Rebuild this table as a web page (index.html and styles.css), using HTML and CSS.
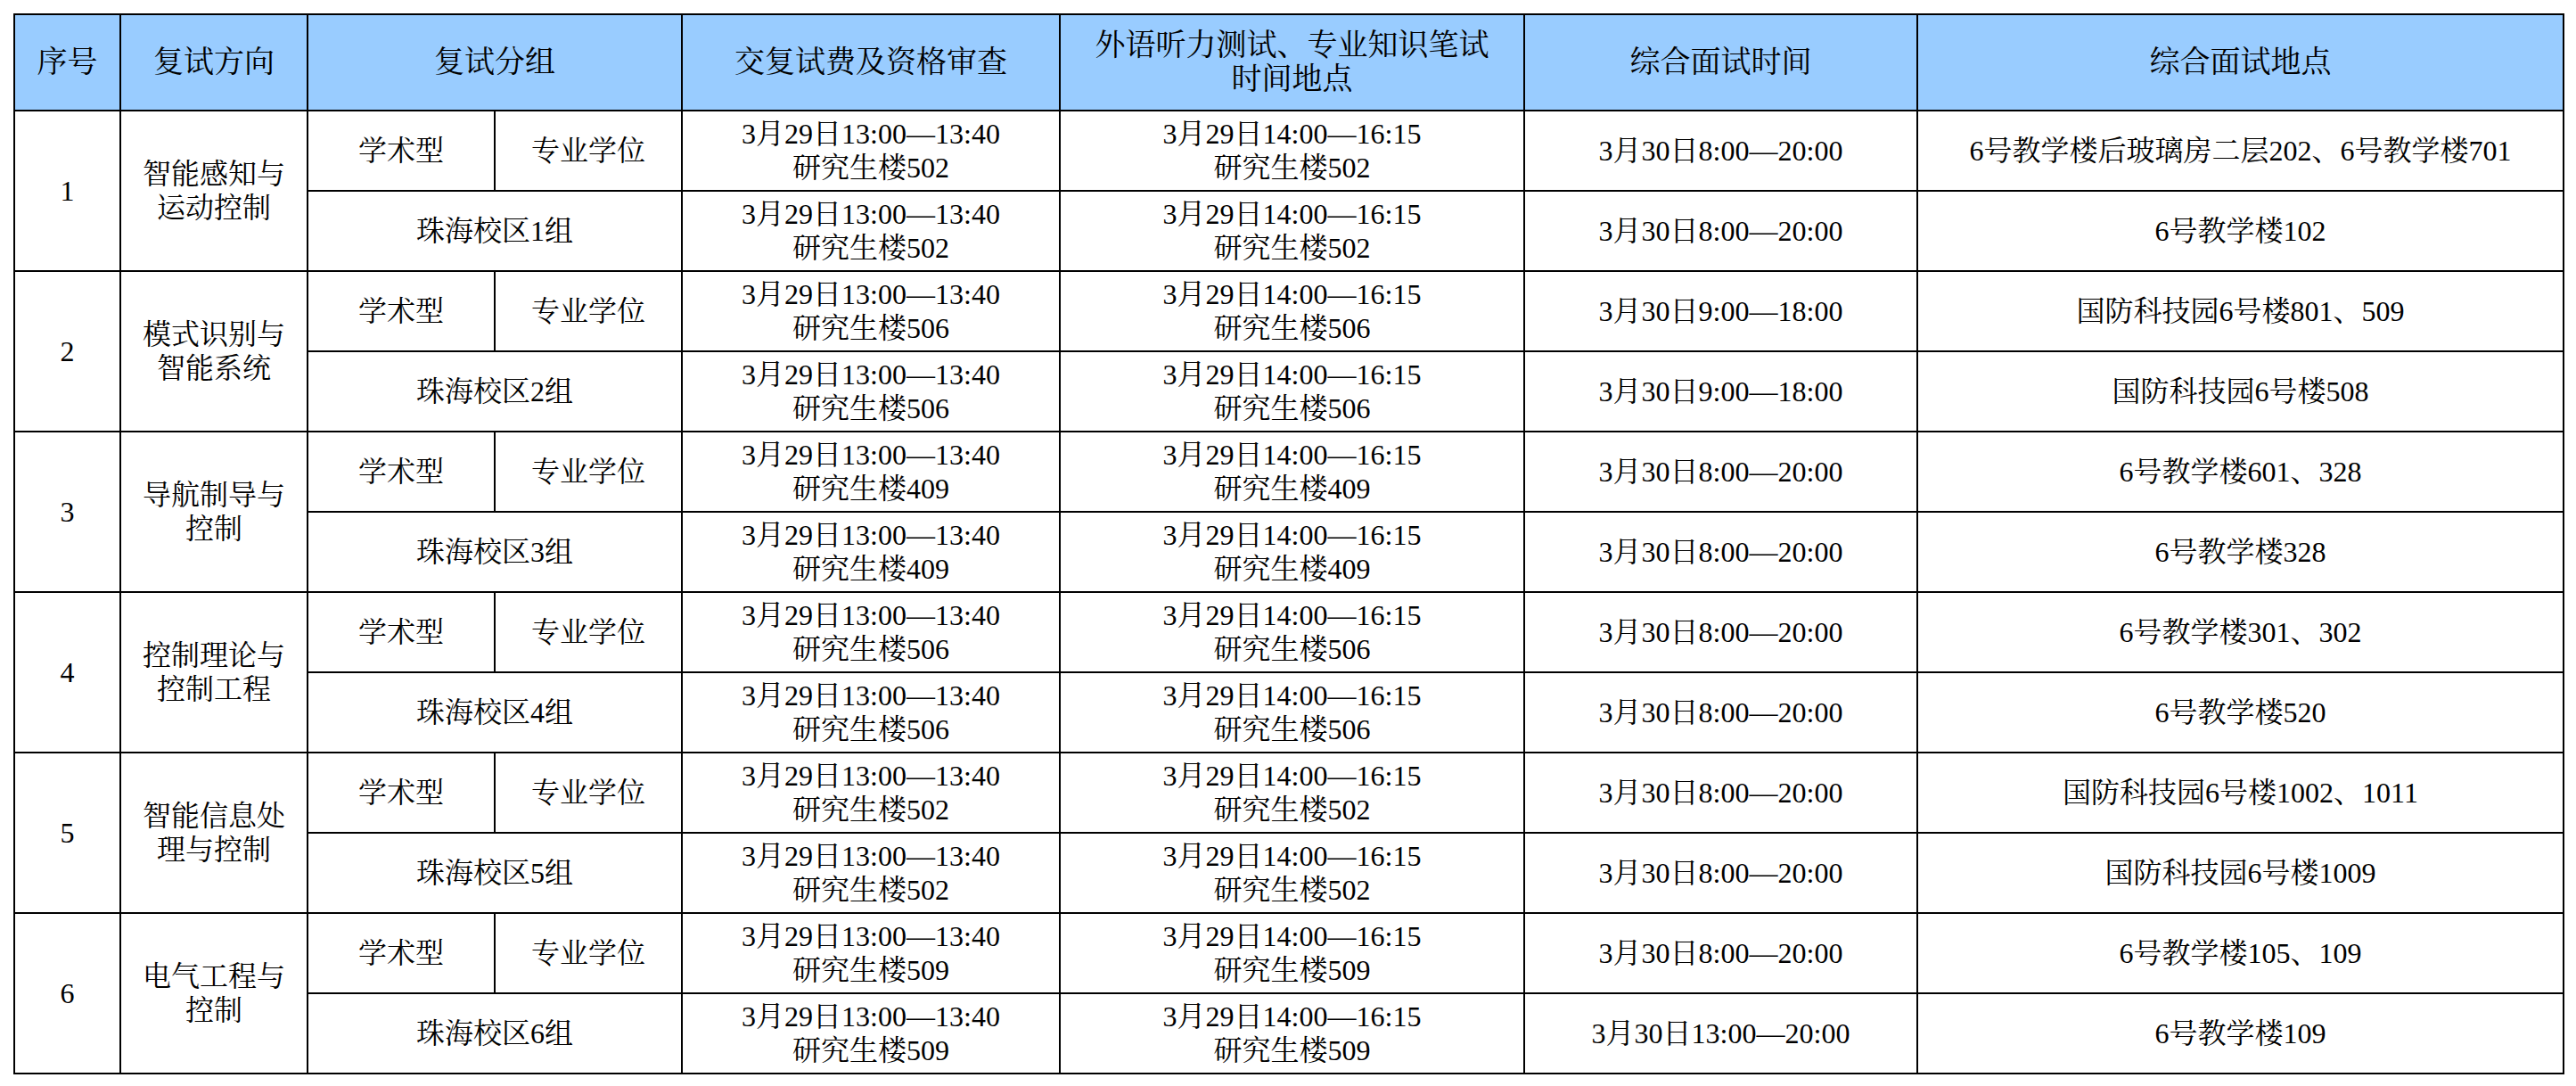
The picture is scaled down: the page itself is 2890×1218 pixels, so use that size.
FILE: index.html
```html
<!DOCTYPE html>
<html lang="zh-CN">
<head>
<meta charset="utf-8">
<title>复试安排</title>
<link rel="stylesheet" href="styles.css">
</head>
<body>
<table class="schedule">
  <colgroup>
    <col class="c-no">
    <col class="c-dir">
    <col class="c-grp">
    <col class="c-grp">
    <col class="c-fee">
    <col class="c-exam">
    <col class="c-time">
    <col class="c-place">
  </colgroup>
  <thead>
    <tr class="head">
      <th>序号</th>
      <th>复试方向</th>
      <th colspan="2">复试分组</th>
      <th>交复试费及资格审查</th>
      <th>外语听力测试、专业知识笔试<br>时间地点</th>
      <th>综合面试时间</th>
      <th>综合面试地点</th>
    </tr>
  </thead>
  <tbody>
    <tr>
      <td rowspan="2">1</td>
      <td rowspan="2">智能感知与<br>运动控制</td>
      <td>学术型</td><td>专业学位</td>
      <td>3月29日13:00—13:40<br>研究生楼502</td>
      <td>3月29日14:00—16:15<br>研究生楼502</td>
      <td>3月30日8:00—20:00</td>
      <td>6号教学楼后玻璃房二层202、6号教学楼701</td>
    </tr>
    <tr>
      <td colspan="2">珠海校区1组</td>
      <td>3月29日13:00—13:40<br>研究生楼502</td>
      <td>3月29日14:00—16:15<br>研究生楼502</td>
      <td>3月30日8:00—20:00</td>
      <td>6号教学楼102</td>
    </tr>
    <tr>
      <td rowspan="2">2</td>
      <td rowspan="2">模式识别与<br>智能系统</td>
      <td>学术型</td><td>专业学位</td>
      <td>3月29日13:00—13:40<br>研究生楼506</td>
      <td>3月29日14:00—16:15<br>研究生楼506</td>
      <td>3月30日9:00—18:00</td>
      <td>国防科技园6号楼801、509</td>
    </tr>
    <tr>
      <td colspan="2">珠海校区2组</td>
      <td>3月29日13:00—13:40<br>研究生楼506</td>
      <td>3月29日14:00—16:15<br>研究生楼506</td>
      <td>3月30日9:00—18:00</td>
      <td>国防科技园6号楼508</td>
    </tr>
    <tr>
      <td rowspan="2">3</td>
      <td rowspan="2">导航制导与<br>控制</td>
      <td>学术型</td><td>专业学位</td>
      <td>3月29日13:00—13:40<br>研究生楼409</td>
      <td>3月29日14:00—16:15<br>研究生楼409</td>
      <td>3月30日8:00—20:00</td>
      <td>6号教学楼601、328</td>
    </tr>
    <tr>
      <td colspan="2">珠海校区3组</td>
      <td>3月29日13:00—13:40<br>研究生楼409</td>
      <td>3月29日14:00—16:15<br>研究生楼409</td>
      <td>3月30日8:00—20:00</td>
      <td>6号教学楼328</td>
    </tr>
    <tr>
      <td rowspan="2">4</td>
      <td rowspan="2">控制理论与<br>控制工程</td>
      <td>学术型</td><td>专业学位</td>
      <td>3月29日13:00—13:40<br>研究生楼506</td>
      <td>3月29日14:00—16:15<br>研究生楼506</td>
      <td>3月30日8:00—20:00</td>
      <td>6号教学楼301、302</td>
    </tr>
    <tr>
      <td colspan="2">珠海校区4组</td>
      <td>3月29日13:00—13:40<br>研究生楼506</td>
      <td>3月29日14:00—16:15<br>研究生楼506</td>
      <td>3月30日8:00—20:00</td>
      <td>6号教学楼520</td>
    </tr>
    <tr>
      <td rowspan="2">5</td>
      <td rowspan="2">智能信息处<br>理与控制</td>
      <td>学术型</td><td>专业学位</td>
      <td>3月29日13:00—13:40<br>研究生楼502</td>
      <td>3月29日14:00—16:15<br>研究生楼502</td>
      <td>3月30日8:00—20:00</td>
      <td>国防科技园6号楼1002、1011</td>
    </tr>
    <tr>
      <td colspan="2">珠海校区5组</td>
      <td>3月29日13:00—13:40<br>研究生楼502</td>
      <td>3月29日14:00—16:15<br>研究生楼502</td>
      <td>3月30日8:00—20:00</td>
      <td>国防科技园6号楼1009</td>
    </tr>
    <tr>
      <td rowspan="2">6</td>
      <td rowspan="2">电气工程与<br>控制</td>
      <td>学术型</td><td>专业学位</td>
      <td>3月29日13:00—13:40<br>研究生楼509</td>
      <td>3月29日14:00—16:15<br>研究生楼509</td>
      <td>3月30日8:00—20:00</td>
      <td>6号教学楼105、109</td>
    </tr>
    <tr>
      <td colspan="2">珠海校区6组</td>
      <td>3月29日13:00—13:40<br>研究生楼509</td>
      <td>3月29日14:00—16:15<br>研究生楼509</td>
      <td>3月30日13:00—20:00</td>
      <td>6号教学楼109</td>
    </tr>
  </tbody>
</table>
</body>
</html>
```
FILE: styles.css
```css
html, body {
  margin: 0;
  padding: 0;
  background: #ffffff;
}

body {
  padding: 15px 15px 0 15px;
  font-family: "Liberation Serif", "Noto Serif CJK SC", "Noto Sans CJK SC", serif;
  color: #000000;
}

.schedule {
  width: 2860px;
  border-collapse: collapse;
  table-layout: fixed;
  font-size: 32px;
  line-height: 38px;
}

.c-no { width: 119px; }
.c-dir { width: 210px; }
.c-grp { width: 210px; }
.c-fee { width: 424px; }
.c-exam { width: 521px; }
.c-time { width: 441px; }
.c-place { width: 725px; }

.schedule th,
.schedule td {
  border: 2px solid #000000;
  text-align: center;
  vertical-align: middle;
  padding: 0 4px;
  font-weight: normal;
  white-space: nowrap;
}

.schedule .head th {
  background: #99ccff;
  height: 106px;
  font-size: 34px;
  line-height: 38px;
}

.schedule tbody tr {
  height: 90px;
}
```
